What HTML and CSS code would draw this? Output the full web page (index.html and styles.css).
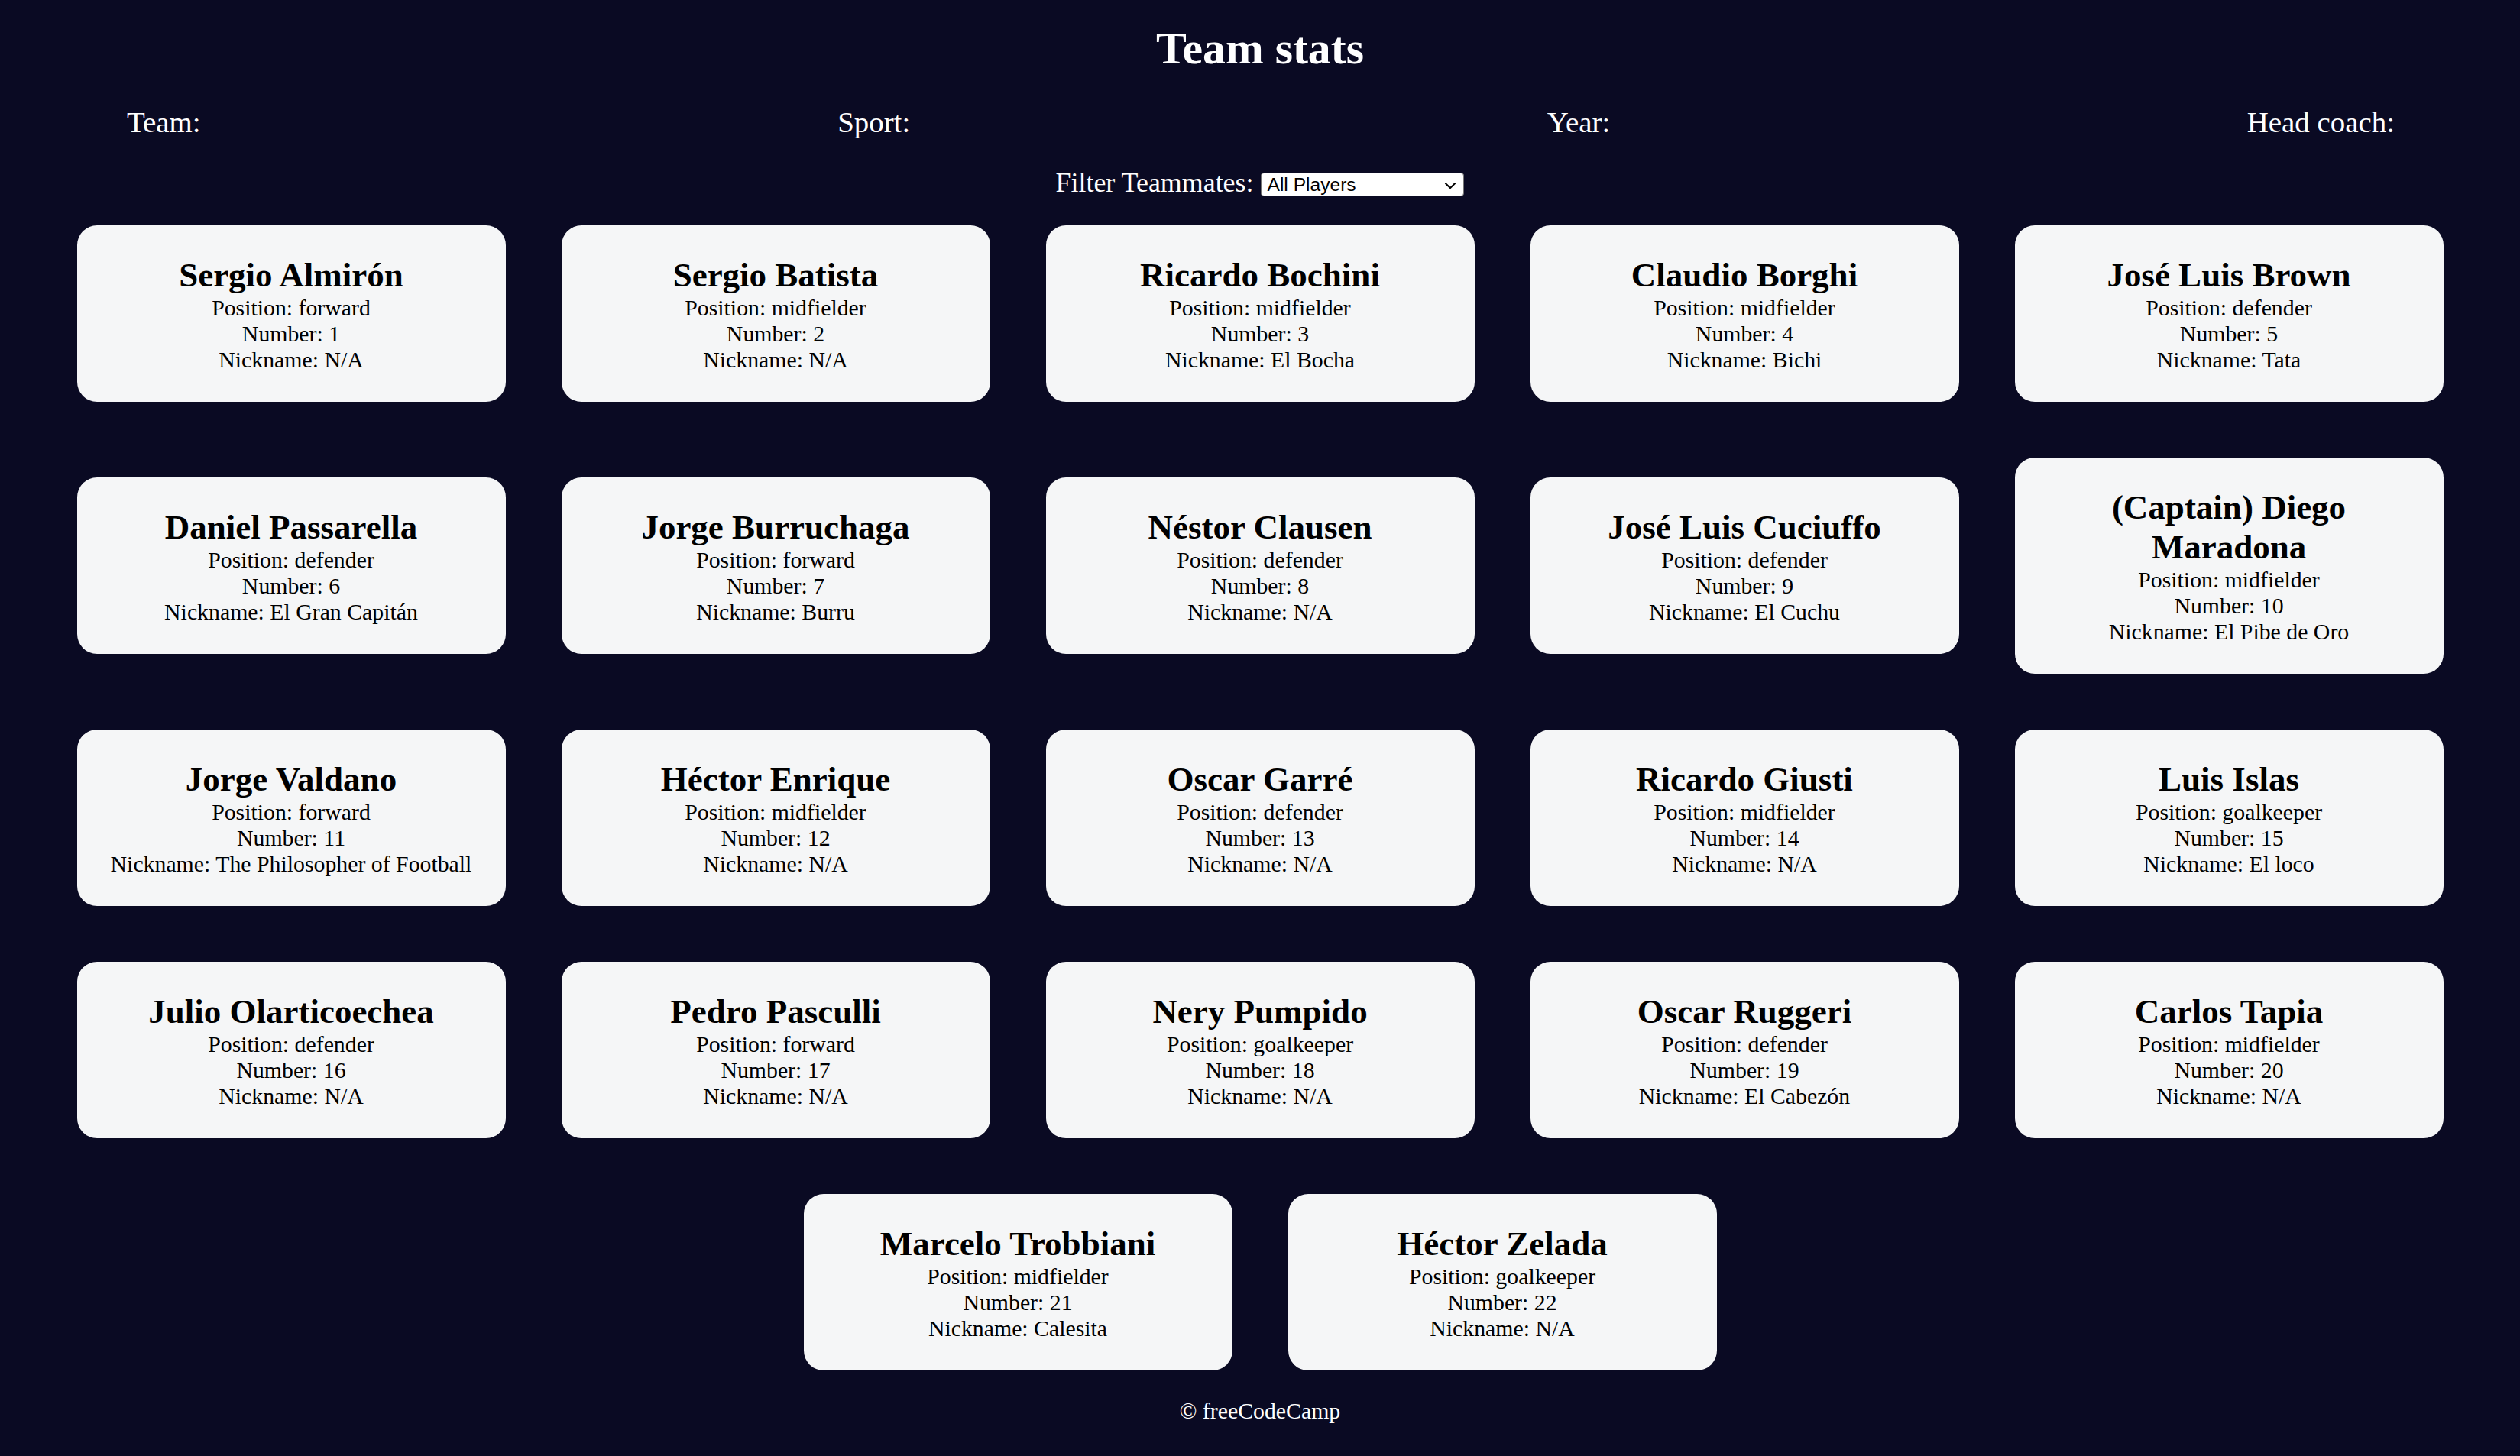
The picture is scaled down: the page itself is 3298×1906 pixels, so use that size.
FILE: index.html
```html
<!DOCTYPE html>
<html lang="en">
<head>
<meta charset="UTF-8">
<title>Team stats</title>
<link rel="stylesheet" href="styles.css">
</head>
<body>
<header class="title-container">
  <h1 class="title">Team stats</h1>
  <div class="team-stats">
    <p class="stat">Team: <span></span></p>
    <p class="stat">Sport: <span></span></p>
    <p class="stat">Year: <span></span></p>
    <p class="stat">Head coach: <span></span></p>
  </div>
</header>
<main>
  <div class="options-container">
    <label class="options-label" for="players">Filter Teammates:</label>
    <span class="select-wrap">
      <select class="players" id="players">
        <option>All Players</option>
        <option>Nicknames</option>
        <option>Forward</option>
        <option>Midfielder</option>
        <option>Defender</option>
        <option>Goalkeeper</option>
      </select>
      <svg class="chev" width="16" height="10" viewBox="0 0 16 10"><path d="M1.5 1.8 L8 8 L14.5 1.8" fill="none" stroke="#000" stroke-width="2"/></svg>
    </span>
  </div>
  <div class="player-cards">
    <div class="player-card"><h2>Sergio Almirón</h2><p>Position: forward</p><p>Number: 1</p><p>Nickname: N/A</p></div>
    <div class="player-card"><h2>Sergio Batista</h2><p>Position: midfielder</p><p>Number: 2</p><p>Nickname: N/A</p></div>
    <div class="player-card"><h2>Ricardo Bochini</h2><p>Position: midfielder</p><p>Number: 3</p><p>Nickname: El Bocha</p></div>
    <div class="player-card"><h2>Claudio Borghi</h2><p>Position: midfielder</p><p>Number: 4</p><p>Nickname: Bichi</p></div>
    <div class="player-card"><h2>José Luis Brown</h2><p>Position: defender</p><p>Number: 5</p><p>Nickname: Tata</p></div>
    <div class="player-card"><h2>Daniel Passarella</h2><p>Position: defender</p><p>Number: 6</p><p>Nickname: El Gran Capitán</p></div>
    <div class="player-card"><h2>Jorge Burruchaga</h2><p>Position: forward</p><p>Number: 7</p><p>Nickname: Burru</p></div>
    <div class="player-card"><h2>Néstor Clausen</h2><p>Position: defender</p><p>Number: 8</p><p>Nickname: N/A</p></div>
    <div class="player-card"><h2>José Luis Cuciuffo</h2><p>Position: defender</p><p>Number: 9</p><p>Nickname: El Cuchu</p></div>
    <div class="player-card"><h2>(Captain) Diego Maradona</h2><p>Position: midfielder</p><p>Number: 10</p><p>Nickname: El Pibe de Oro</p></div>
    <div class="player-card"><h2>Jorge Valdano</h2><p>Position: forward</p><p>Number: 11</p><p>Nickname: The Philosopher of Football</p></div>
    <div class="player-card"><h2>Héctor Enrique</h2><p>Position: midfielder</p><p>Number: 12</p><p>Nickname: N/A</p></div>
    <div class="player-card"><h2>Oscar Garré</h2><p>Position: defender</p><p>Number: 13</p><p>Nickname: N/A</p></div>
    <div class="player-card"><h2>Ricardo Giusti</h2><p>Position: midfielder</p><p>Number: 14</p><p>Nickname: N/A</p></div>
    <div class="player-card"><h2>Luis Islas</h2><p>Position: goalkeeper</p><p>Number: 15</p><p>Nickname: El loco</p></div>
    <div class="player-card"><h2>Julio Olarticoechea</h2><p>Position: defender</p><p>Number: 16</p><p>Nickname: N/A</p></div>
    <div class="player-card"><h2>Pedro Pasculli</h2><p>Position: forward</p><p>Number: 17</p><p>Nickname: N/A</p></div>
    <div class="player-card"><h2>Nery Pumpido</h2><p>Position: goalkeeper</p><p>Number: 18</p><p>Nickname: N/A</p></div>
    <div class="player-card"><h2>Oscar Ruggeri</h2><p>Position: defender</p><p>Number: 19</p><p>Nickname: El Cabezón</p></div>
    <div class="player-card"><h2>Carlos Tapia</h2><p>Position: midfielder</p><p>Number: 20</p><p>Nickname: N/A</p></div>
    <div class="player-card"><h2>Marcelo Trobbiani</h2><p>Position: midfielder</p><p>Number: 21</p><p>Nickname: Calesita</p></div>
    <div class="player-card"><h2>Héctor Zelada</h2><p>Position: goalkeeper</p><p>Number: 22</p><p>Nickname: N/A</p></div>
  </div>
</main>
<footer class="footer">&copy; freeCodeCamp</footer>
</body>
</html>
```
FILE: styles.css
```css
*,
*::before,
*::after {
  box-sizing: border-box;
}

html {
  background-color: #0a0a23;
}

body {
  margin: 0;
  background-color: #0a0a23;
  font-family: "Liberation Serif", "Times New Roman", serif;
  text-align: center;
  color: #000;
}

.title-container {
  color: #ffffff;
}

.title {
  margin: 0;
  padding-top: 29px;
  font-size: 59.8px;
  font-weight: bold;
  line-height: normal;
}

.team-stats {
  display: flex;
  justify-content: space-between;
  padding: 0 164px 0 166px;
  margin-top: 39px;
  font-size: 38.9px;
  color: #ffffff;
}

.stat {
  margin: 0;
  line-height: normal;
}

.options-container {
  margin-top: 36px;
  display: flex;
  justify-content: center;
  align-items: center;
  gap: 10px;
  color: #ffffff;
}

.options-label {
  font-size: 35.9px;
  line-height: normal;
}

.select-wrap {
  position: relative;
  display: inline-block;
  height: 31px;
  margin-top: 4px;
}

.players {
  appearance: none;
  -webkit-appearance: none;
  width: 266px;
  height: 31px;
  padding: 0 0 0 7px;
  font-family: "Liberation Sans", Arial, sans-serif;
  font-size: 24.6px;
  line-height: 29px;
  color: #000;
  background: #ffffff;
  border: 1px solid #767676;
  border-radius: 4px;
  text-align: left;
}

.chev {
  position: absolute;
  right: 10px;
  top: 12px;
  pointer-events: none;
}

.player-cards {
  display: flex;
  flex-wrap: wrap;
  justify-content: center;
  align-items: center;
  gap: 73px;
  margin-top: 35px;
}

.player-card {
  width: 561px;
  padding: 38.5px 38.7px;
  background-color: #f5f6f7;
  border-radius: 26px;
  color: #000;
}

.player-card h2 {
  margin: 0;
  font-size: 45px;
  font-weight: bold;
  line-height: normal;
}

.player-card p {
  margin: 0;
  font-size: 29.8px;
  line-height: normal;
}

.footer {
  margin-top: 36px;
  font-size: 29.8px;
  line-height: normal;
  color: #ffffff;
}
```
